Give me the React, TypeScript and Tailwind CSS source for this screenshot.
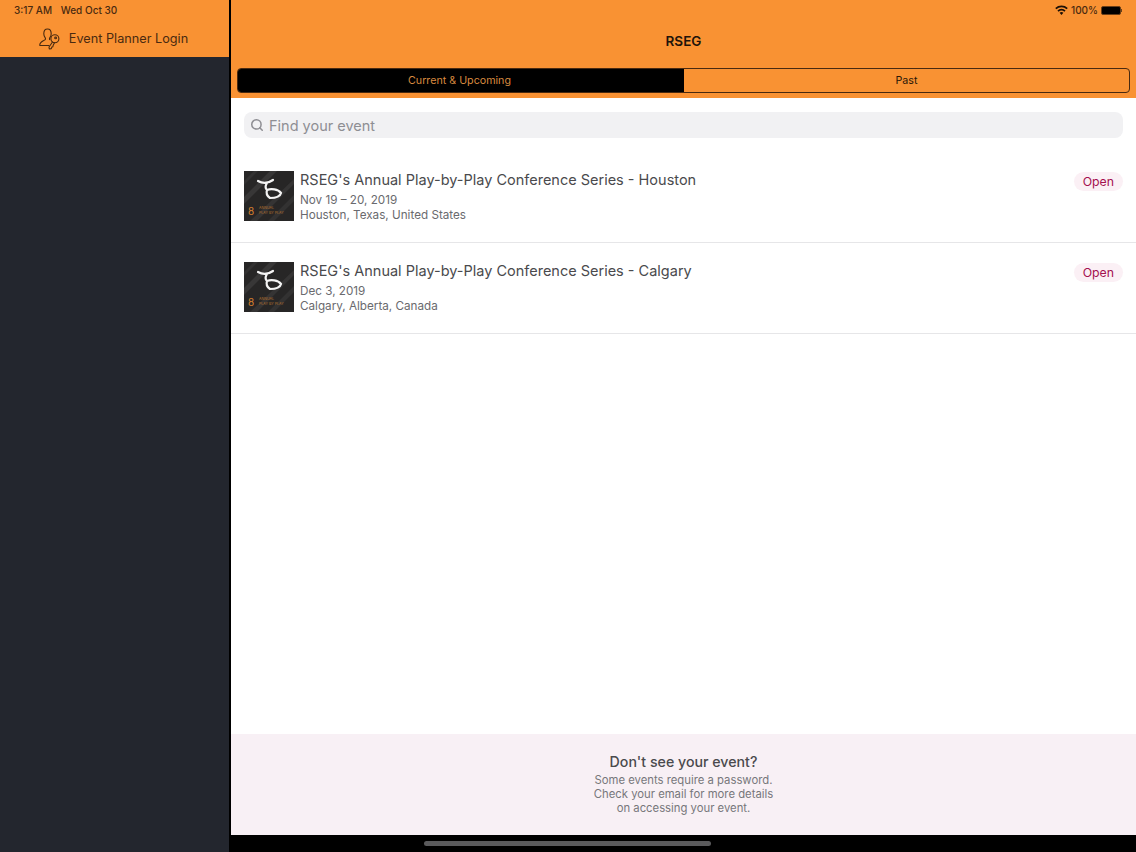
import { Search } from "lucide-react";

const events = [
  {
    title: "RSEG's Annual Play-by-Play Conference Series - Houston",
    date: "Nov 19 – 20, 2019",
    place: "Houston, Texas, United States",
  },
  {
    title: "RSEG's Annual Play-by-Play Conference Series - Calgary",
    date: "Dec 3, 2019",
    place: "Calgary, Alberta, Canada",
  },
];

function KeyUserIcon() {
  return (
    <svg width="22" height="22" viewBox="0 0 22 22" fill="none" stroke="#4a2a10" strokeWidth="1.1" strokeLinecap="round" strokeLinejoin="round">
      <path d="M10.6 11.6c-.3-.9-.2-1.3.3-2 .9-1 1.3-2.400 1.300-3.800C12.200 3 10.600 1 8.500 1S4.800 3 4.800 5.800c0 1.400.5 2.800 1.300 3.800.5.700.5 1.400 0 2-.8.900-3.100 1.700-4.300 3-.8.900-1.200 2-.9 2.900h9" />
      <circle cx="15.900" cy="10.700" r="4" />
      <circle cx="16.600" cy="9.900" r="0.900" />
      <path d="M13.500 14l-3.500 5 .3 2 2-.4.500-1.500 1-.3.300-1.200 1.400-2.900" />
    </svg>
  );
}

function EventThumb() {
  return (
    <svg width="50" height="50" viewBox="0 0 50 50" className="shrink-0">
      <rect width="50" height="50" fill="#272626" />
      <path d="M0 26 L26 0 H33 L0 33Z" fill="#383737" />
      <path d="M6 50 L50 8 V13 L13 50Z" fill="#353434" />
      <path d="M24 50 L50 24 V30 L30 50Z" fill="#333232" />
      <path d="M0 10 L10 0 H14 L0 14Z" fill="#323131" />
      <path
        d="M14 10 C19 13 24 12.500 29 9 M23 12 C21 15 21 17 23 19 C27 17.500 34 18 37 22 C36 26 30 27 26 27 C23 25 22 22 23 19"
        fill="none"
        stroke="#f4f4f4"
        strokeWidth="2.200"
        strokeLinecap="round"
      />
      <text x="4" y="44" fontSize="10" fill="#d9812f" fontFamily="Inter, sans-serif">8</text>
      <text x="15" y="38" fontSize="3.600" fill="#b5702e" fontFamily="Inter, sans-serif">ANNUAL</text>
      <text x="15" y="43" fontSize="3.600" fill="#b5702e" fontFamily="Inter, sans-serif">PLAY BY PLAY</text>
    </svg>
  );
}

function EventRow({ title, date, place }: { title: string; date: string; place: string }) {
  return (
    <div className="flex h-[91px] items-start border-b border-[#e6e6e8] px-[13px] pt-[19px]">
      <EventThumb />
      <div className="ml-[6px] min-w-0 flex-1">
        <div className="text-[14.500px] leading-[18px] text-[#4a4a4d]">{title}</div>
        <div className="mt-[4px] text-[11.700px] leading-[15px] text-[#6a6a6e]">{date}</div>
        <div className="text-[11.700px] leading-[15px] text-[#6a6a6e]">{place}</div>
      </div>
      <div className="mt-[1px] rounded-full bg-[#fbf0f5] px-[9px] text-[12.300px] leading-[19px] text-[#a4114f]">
        Open
      </div>
    </div>
  );
}

export default function App() {
  return (
    <div className="flex h-[852px] w-[1136px] overflow-hidden bg-black font-['Inter',sans-serif]">
      {/* Left sidebar */}
      <div className="flex w-[229px] shrink-0 flex-col bg-[#23262e]">
        <div className="h-[57px] bg-[#f99233] text-[#4a2a10]">
          <div className="pl-[14px] pt-[4px] text-[10px] leading-[13px] font-medium">
            3:17 AM <span className="ml-[6px]">Wed Oct 30</span>
          </div>
          <div className="mt-[11px] flex items-center justify-center gap-[8px] pr-[2px]">
            <KeyUserIcon />
            <span className="text-[12.700px] leading-[20px] text-[#4a2a10]">Event Planner Login</span>
          </div>
        </div>
      </div>

      {/* Main */}
      <div className="ml-[2px] flex min-w-0 flex-1 flex-col">
        <div className="h-[98px] bg-[#f99233] px-[6px]">
          <div className="flex h-[17px] items-center justify-end gap-[3px] pr-[8px] pt-[3px] text-[10px] font-medium text-[#4a2a10]">
            <svg width="13" height="10" viewBox="0 0 13 10">
              <path d="M6.500 10 4.600 7.800a2.800 2.800 0 0 1 3.800 0zM3.600 6.700 2.400 5.400a6 6 0 0 1 8.200 0L9.400 6.700a4.300 4.300 0 0 0-5.800 0zM1.400 4.300.2 3a9.300 9.300 0 0 1 12.600 0l-1.200 1.300a7.600 7.600 0 0 0-10.200 0z" fill="#1c1007" />
            </svg>
            <span>100%</span>
            <div className="flex items-center">
              <div className="h-[9px] w-[20px] rounded-[2px] border border-[#6a3f18] bg-black" />
              <div className="h-[3px] w-[1px] bg-[#6a3f18]" />
            </div>
          </div>
          <div className="pt-[15px] text-center text-[13.500px] leading-[18px] font-semibold text-[#20130a]">RSEG</div>
          <div className="mt-[18px] flex h-[25px] overflow-hidden rounded-[4px] border border-[#4a2a10] text-[10.700px]">
            <div className="flex w-[446px] items-center justify-center bg-black pt-[1px] pr-[3px] text-[#d98a3f]">Current &amp; Upcoming</div>
            <div className="flex flex-1 items-center justify-center pt-[1px] text-[#2a1707]">Past</div>
          </div>
        </div>

        <div className="flex flex-1 flex-col bg-white">
          <div className="px-[13px] pt-[14px]">
            <div className="flex h-[26px] items-center rounded-[8px] bg-[#f1f1f3] pl-[6px]">
              <Search size={14} strokeWidth={2.600} className="text-[#8e8e93]" />
              <span className="ml-[5px] pt-[1px] text-[14.500px] text-[#8e8e93]">Find your event</span>
            </div>
          </div>
          <div className="mt-[14px]">
            {events.map((e) => (
              <EventRow key={e.title} {...e} />
            ))}
          </div>

          <div className="mt-auto flex h-[101px] flex-col items-center bg-[#f8f0f5] pt-[18px] text-center">
            <div className="text-[14.200px] leading-[20px] font-medium text-[#4a4a4d]">Don't see your event?</div>
            <div className="mt-[1px] text-[11.300px] leading-[14px] text-[#77777b]">
              Some events require a password.
              <br />
              Check your email for more details
              <br />
              on accessing your event.
            </div>
          </div>
          <div className="relative h-[17px] bg-black">
            <div className="absolute left-[193px] top-[6px] h-[5px] w-[287px] rounded-full bg-[#5a5a5c]" />
          </div>
        </div>
      </div>
    </div>
  );
}
